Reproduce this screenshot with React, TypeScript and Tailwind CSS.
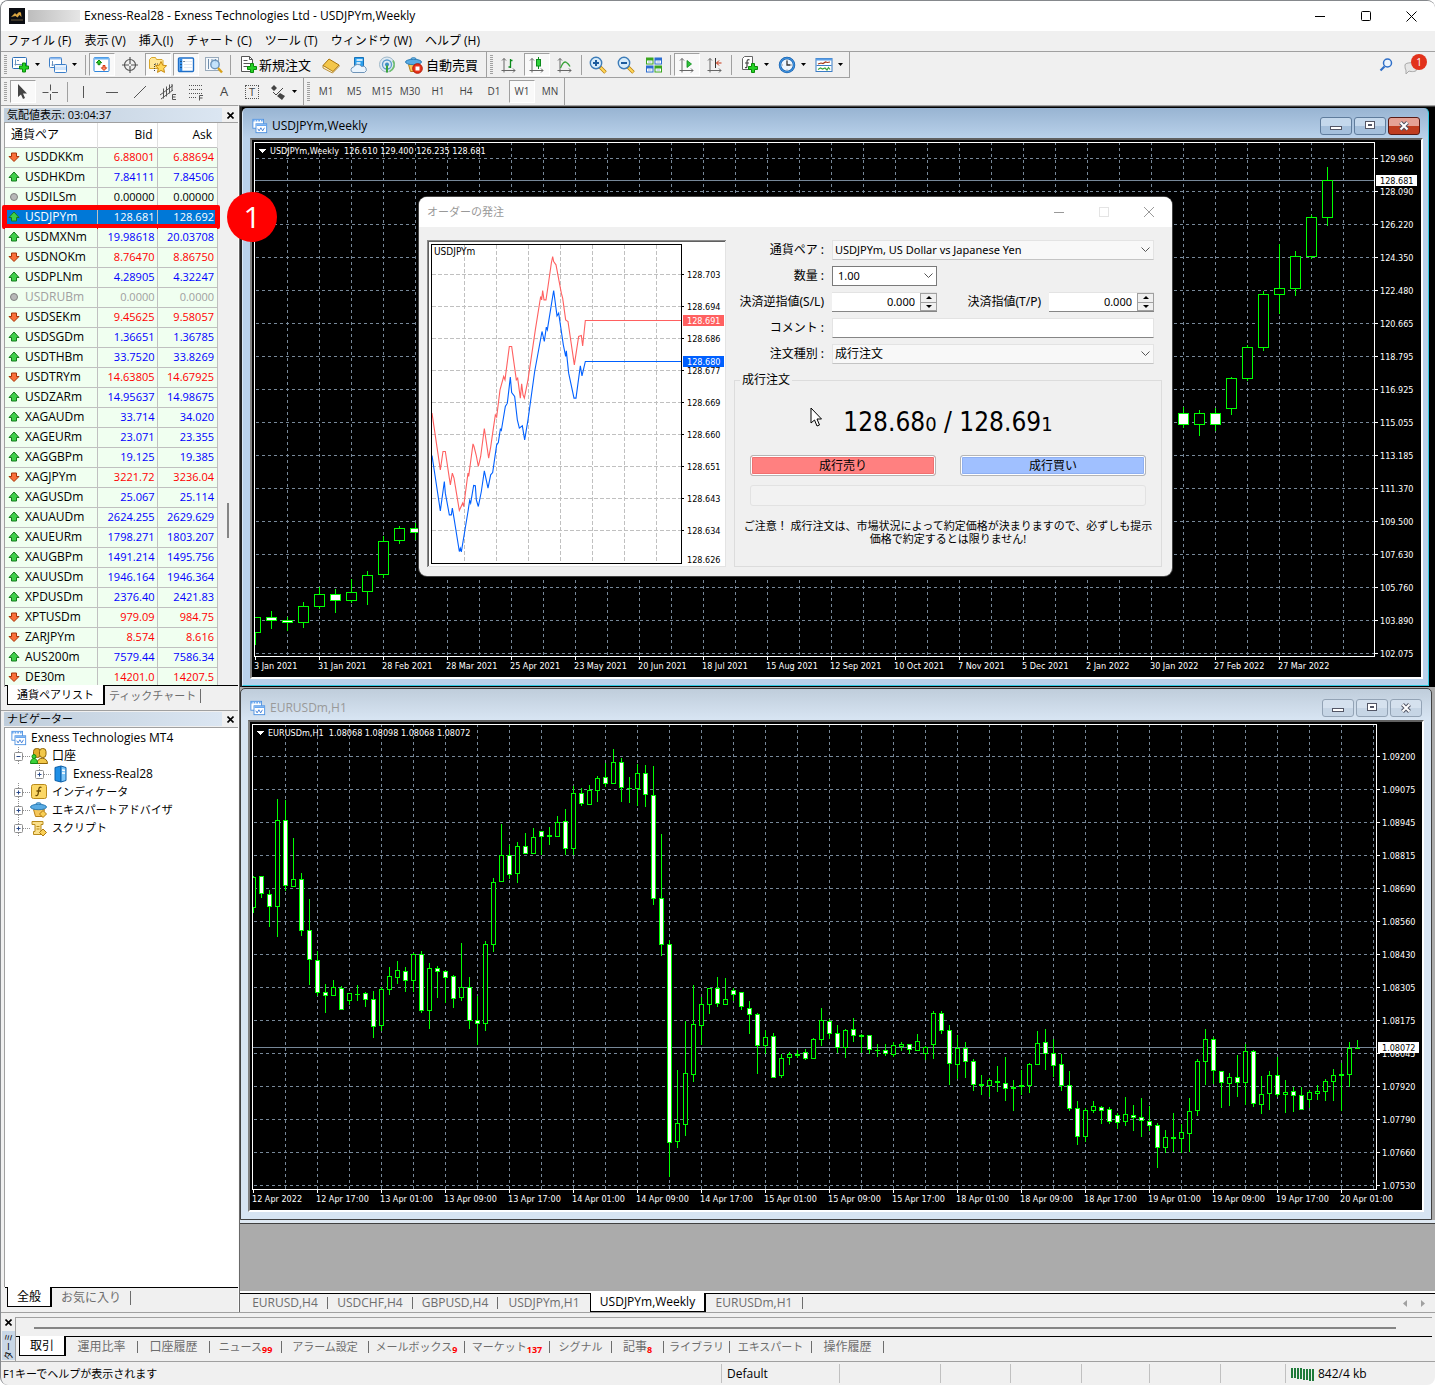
import type { ReactNode } from 'react';

type Dir = 'up' | 'down' | 'flat' | 'off';

const quotes: { symbol: string; bid: string; ask: string; dir: Dir; selected?: boolean }[] = [
  { symbol: 'USDDKKm', bid: '6.88001', ask: '6.88694', dir: 'down' },
  { symbol: 'USDHKDm', bid: '7.84111', ask: '7.84506', dir: 'up' },
  { symbol: 'USDILSm', bid: '0.00000', ask: '0.00000', dir: 'flat' },
  { symbol: 'USDJPYm', bid: '128.681', ask: '128.692', dir: 'up', selected: true },
  { symbol: 'USDMXNm', bid: '19.98618', ask: '20.03708', dir: 'up' },
  { symbol: 'USDNOKm', bid: '8.76470', ask: '8.86750', dir: 'down' },
  { symbol: 'USDPLNm', bid: '4.28905', ask: '4.32247', dir: 'up' },
  { symbol: 'USDRUBm', bid: '0.0000', ask: '0.0000', dir: 'off' },
  { symbol: 'USDSEKm', bid: '9.45625', ask: '9.58057', dir: 'down' },
  { symbol: 'USDSGDm', bid: '1.36651', ask: '1.36785', dir: 'up' },
  { symbol: 'USDTHBm', bid: '33.7520', ask: '33.8269', dir: 'up' },
  { symbol: 'USDTRYm', bid: '14.63805', ask: '14.67925', dir: 'down' },
  { symbol: 'USDZARm', bid: '14.95637', ask: '14.98675', dir: 'up' },
  { symbol: 'XAGAUDm', bid: '33.714', ask: '34.020', dir: 'up' },
  { symbol: 'XAGEURm', bid: '23.071', ask: '23.355', dir: 'up' },
  { symbol: 'XAGGBPm', bid: '19.125', ask: '19.385', dir: 'up' },
  { symbol: 'XAGJPYm', bid: '3221.72', ask: '3236.04', dir: 'down' },
  { symbol: 'XAGUSDm', bid: '25.067', ask: '25.114', dir: 'up' },
  { symbol: 'XAUAUDm', bid: '2624.255', ask: '2629.629', dir: 'up' },
  { symbol: 'XAUEURm', bid: '1798.271', ask: '1803.207', dir: 'up' },
  { symbol: 'XAUGBPm', bid: '1491.214', ask: '1495.756', dir: 'up' },
  { symbol: 'XAUUSDm', bid: '1946.164', ask: '1946.364', dir: 'up' },
  { symbol: 'XPDUSDm', bid: '2376.40', ask: '2421.83', dir: 'up' },
  { symbol: 'XPTUSDm', bid: '979.09', ask: '984.75', dir: 'down' },
  { symbol: 'ZARJPYm', bid: '8.574', ask: '8.616', dir: 'down' },
  { symbol: 'AUS200m', bid: '7579.44', ask: '7586.34', dir: 'up' },
  { symbol: 'DE30m', bid: '14201.0', ask: '14207.5', dir: 'down' },
];

const dirColor: Record<Dir, string> = {
  up: 'text-[#0000ff]',
  down: 'text-[#ff0000]',
  flat: 'text-black',
  off: 'text-[#a0a0a0]',
};

const menus = ['ファイル (F)', '表示 (V)', '挿入(I)', 'チャート (C)', 'ツール (T)', 'ウィンドウ (W)', 'ヘルプ (H)'];
const timeframes = ['M1', 'M5', 'M15', 'M30', 'H1', 'H4', 'D1', 'W1', 'MN'];

const terminalTabs = [
  { label: '運用比率', style: 'w-[72px] text-[12px]' },
  { label: '口座履歴', style: 'w-[72px] text-[12px]' },
  { label: 'ニュース', badge: '99', style: 'w-[72px] text-[11px]' },
  { label: 'アラーム設定', style: 'w-[87px] text-[11px]' },
  { label: 'メールボックス', badge: '9', style: 'w-[96px] text-[11px]' },
  { label: 'マーケット', badge: '137', style: 'w-[85px] text-[11px]' },
  { label: 'シグナル', style: 'w-[62px] text-[11px]' },
  { label: '記事', badge: '8', style: 'w-[52px] text-[12px]' },
  { label: 'ライブラリ', style: 'w-[66px] text-[11px]' },
  { label: 'エキスパート', style: 'w-[82px] text-[11px]' },
  { label: '操作履歴', style: 'w-[72px] text-[12px]' },
];

// x, high, body top, body bottom, low, bearish
type Candle = [number, number, number, number, number, number];

const weekly: Candle[] = [
  [255, 617, 617, 632, 644, 0], [271, 611, 617, 620, 628, 1], [287, 617, 620, 622, 630, 1],
  [303, 602, 606, 622, 627, 0], [319, 587, 594, 606, 608, 0], [335, 589, 594, 600, 612, 1],
  [351, 579, 592, 600, 602, 0], [367, 571, 575, 591, 604, 0], [383, 536, 541, 574, 577, 0],
  [399, 526, 528, 540, 543, 0], [415, 523, 528, 532, 539, 1], [1167, 410, 413, 420, 424, 0],
  [1183, 407, 413, 424, 427, 1], [1199, 410, 413, 424, 435, 0], [1215, 408, 413, 424, 430, 1],
  [1231, 377, 378, 408, 414, 0], [1247, 345, 347, 378, 380, 0], [1263, 291, 294, 347, 350, 0],
  [1279, 244, 288, 294, 313, 0], [1295, 251, 256, 288, 295, 0], [1311, 215, 217, 256, 258, 0],
  [1327, 167, 180, 217, 225, 0],
];

// one entry per hour: high, body top, body bottom, low, bearish
const hourlyBars: [number, number, number, number, number][] = [
  [876, 877, 907, 912, 0], [876, 876, 893, 897, 1], [890, 894, 906, 926, 1], [799, 820, 906, 936, 0],
  [800, 820, 885, 890, 1], [838, 879, 886, 886, 0], [873, 879, 930, 935, 1], [899, 930, 959, 984, 1],
  [951, 960, 992, 995, 1], [984, 992, 995, 1012, 1], [980, 987, 995, 995, 0], [986, 988, 1009, 1009, 1],
  [993, 993, 1000, 1004, 0], [985, 994, 994, 1000, 0], [992, 993, 999, 1006, 1], [991, 999, 1026, 1037, 1],
  [987, 989, 1025, 1030, 0], [967, 976, 989, 994, 0], [961, 970, 977, 983, 0], [967, 971, 980, 991, 1],
  [953, 954, 980, 991, 0], [951, 954, 1010, 1012, 1], [963, 968, 1010, 1028, 0], [966, 968, 971, 997, 1],
  [970, 971, 977, 1002, 1], [975, 976, 998, 1007, 1], [943, 987, 997, 1000, 0], [977, 987, 1020, 1028, 1],
  [996, 1020, 1023, 1044, 1], [941, 944, 1023, 1030, 0], [878, 882, 944, 951, 0], [824, 855, 881, 881, 0],
  [845, 855, 874, 878, 1], [842, 846, 873, 882, 0], [833, 846, 853, 853, 1], [828, 837, 853, 853, 0],
  [831, 831, 836, 854, 1], [827, 835, 836, 844, 0], [816, 822, 836, 836, 0], [809, 821, 848, 854, 1],
  [786, 793, 848, 854, 0], [788, 793, 803, 805, 1], [785, 790, 804, 804, 0], [776, 778, 790, 801, 0],
  [763, 777, 783, 786, 1], [749, 762, 783, 783, 0], [758, 762, 787, 801, 1], [777, 788, 788, 802, 0],
  [764, 773, 788, 805, 0], [765, 773, 794, 806, 1], [766, 795, 898, 904, 1], [834, 898, 944, 955, 1],
  [940, 944, 1142, 1176, 1], [1070, 1123, 1141, 1147, 0], [1021, 1073, 1124, 1135, 0], [985, 1024, 1074, 1081, 0],
  [997, 1004, 1025, 1044, 0], [988, 988, 1004, 1013, 0], [977, 988, 1003, 1006, 1], [978, 999, 1004, 1004, 0],
  [988, 990, 994, 1000, 1], [992, 992, 1006, 1009, 1], [1001, 1008, 1014, 1033, 1], [1013, 1014, 1045, 1073, 1],
  [1030, 1037, 1045, 1053, 0], [1033, 1036, 1077, 1077, 1], [1054, 1058, 1075, 1077, 0], [1052, 1054, 1057, 1064, 0],
  [1050, 1054, 1055, 1057, 0], [1049, 1052, 1058, 1059, 1], [1038, 1039, 1058, 1058, 0], [1008, 1020, 1039, 1045, 0],
  [1019, 1021, 1033, 1038, 1], [1025, 1033, 1047, 1052, 1], [1029, 1030, 1047, 1057, 0], [1018, 1029, 1035, 1041, 1],
  [1034, 1035, 1036, 1052, 0], [1035, 1035, 1049, 1053, 1], [1044, 1050, 1050, 1056, 0], [1044, 1050, 1053, 1055, 1],
  [1042, 1045, 1054, 1056, 0], [1042, 1044, 1046, 1050, 0], [1044, 1044, 1049, 1053, 1], [1034, 1041, 1050, 1050, 0],
  [1046, 1047, 1053, 1059, 0], [1011, 1013, 1044, 1058, 0], [1011, 1013, 1030, 1033, 1], [1025, 1030, 1063, 1084, 1],
  [1035, 1048, 1064, 1078, 0], [1042, 1048, 1061, 1077, 1], [1059, 1061, 1084, 1090, 1], [1075, 1084, 1085, 1094, 0],
  [1078, 1080, 1085, 1096, 0], [1066, 1081, 1082, 1091, 0], [1057, 1083, 1088, 1100, 1], [1080, 1087, 1088, 1110, 0],
  [1070, 1085, 1086, 1094, 0], [1063, 1064, 1085, 1092, 0], [1031, 1043, 1064, 1064, 0], [1029, 1042, 1053, 1069, 1],
  [1039, 1053, 1065, 1076, 1], [1054, 1064, 1085, 1090, 1], [1071, 1085, 1108, 1110, 1], [1101, 1108, 1136, 1144, 1],
  [1108, 1110, 1136, 1141, 0], [1101, 1106, 1110, 1112, 0], [1106, 1107, 1110, 1123, 1], [1107, 1109, 1121, 1123, 1],
  [1113, 1115, 1122, 1128, 1], [1097, 1114, 1121, 1125, 0], [1105, 1115, 1117, 1130, 1], [1098, 1117, 1120, 1136, 1],
  [1106, 1121, 1125, 1130, 1], [1123, 1125, 1147, 1167, 1], [1130, 1137, 1147, 1152, 0], [1113, 1137, 1138, 1151, 0],
  [1124, 1132, 1138, 1152, 0], [1098, 1111, 1133, 1151, 0], [1059, 1061, 1110, 1115, 0], [1029, 1039, 1061, 1084, 0],
  [1037, 1039, 1070, 1083, 1], [1071, 1071, 1082, 1107, 1], [1073, 1077, 1083, 1105, 0], [1055, 1077, 1082, 1096, 1],
  [1044, 1051, 1082, 1104, 0], [1050, 1051, 1103, 1106, 1], [1076, 1094, 1104, 1113, 0], [1071, 1075, 1093, 1109, 0],
  [1057, 1075, 1094, 1096, 1], [1080, 1092, 1094, 1112, 0], [1087, 1091, 1095, 1111, 1], [1087, 1095, 1109, 1109, 1],
  [1090, 1092, 1099, 1107, 0], [1085, 1091, 1093, 1099, 0], [1079, 1081, 1091, 1100, 0], [1069, 1075, 1081, 1100, 0],
  [1063, 1074, 1075, 1110, 0], [1042, 1048, 1074, 1086, 0], [1040, 1048, 1048, 1048, 0],
];
const hourly: Candle[] = hourlyBars.map(([h, t, b, l, bear], i) => [253 + i * 8, h, t, b, l, bear]);

const weeklyPrices = ['129.960', '128.090', '126.220', '124.350', '122.480', '120.665', '118.795', '116.925', '115.055', '113.185', '111.370', '109.500', '107.630', '105.760', '103.890', '102.075'];
const weeklyDates = ['3 Jan 2021', '31 Jan 2021', '28 Feb 2021', '28 Mar 2021', '25 Apr 2021', '23 May 2021', '20 Jun 2021', '18 Jul 2021', '15 Aug 2021', '12 Sep 2021', '10 Oct 2021', '7 Nov 2021', '5 Dec 2021', '2 Jan 2022', '30 Jan 2022', '27 Feb 2022', '27 Mar 2022'];
const hourlyPrices = ['1.09200', '1.09075', '1.08945', '1.08815', '1.08690', '1.08560', '1.08430', '1.08305', '1.08175', '1.08045', '1.07920', '1.07790', '1.07660', '1.07530'];
const hourlyDates = ['12 Apr 2022', '12 Apr 17:00', '13 Apr 01:00', '13 Apr 09:00', '13 Apr 17:00', '14 Apr 01:00', '14 Apr 09:00', '14 Apr 17:00', '15 Apr 01:00', '15 Apr 09:00', '15 Apr 17:00', '18 Apr 01:00', '18 Apr 09:00', '18 Apr 17:00', '19 Apr 01:00', '19 Apr 09:00', '19 Apr 17:00', '20 Apr 01:00'];

const tickAsk = '42,670 67,840 75,785 82,785 97,885 103,850 108,865 124,962 134,940 137,950 150,850 152,860 165,762 168,770 175,798 181,830 188,800 199,716 212,805 218,772 224,730 232,675 236,682 246,600 257,560 261,570 274,470 281,470 295,570 299,565 307,625 311,582 315,615 319,625 330,570 352,420 368,320 371,330 374,302 378,330 384,330 390,290 400,220 404,200 407,215 414,225 430,310 434,325 443,390 450,395 469,525 482,440 490,437 494,468 502,392 790,392';
const tickBid = '42,797 67,963 79,875 82,910 94,975 100,975 103,955 108,985 124,1085 127,1075 130,1086 150,965 155,932 158,940 167,887 172,888 175,930 181,950 190,905 199,843 210,895 218,855 224,848 236,765 241,758 247,718 250,722 262,650 268,640 277,562 281,608 290,620 298,690 304,715 313,708 320,750 330,690 350,545 372,425 379,455 385,412 388,420 400,345 407,302 417,378 422,370 436,465 443,500 445,483 452,550 468,625 474,625 487,528 492,558 502,515 790,515';
const tickPrices = ['128.703', '128.694', '128.686', '128.677', '128.669', '128.660', '128.651', '128.643', '128.634'];

/* ---------- icons ---------- */

function Svg({ children, size = 18 }: { children: ReactNode; size?: number }) {
  return (
    <svg width={size} height={size} viewBox="0 0 18 18" fill="none" className="shrink-0" aria-hidden="true">
      {children}
    </svg>
  );
}

const Plus = ({ x, y }: { x: number; y: number }) => (
  <path transform={`translate(${x} ${y})`} d="M3.5.5h3v3h3v3h-3v3h-3v-3h-3v-3h3z" fill="#25d125" stroke="#0a8a0a" />
);

const ChartsIcon = ({ size = 16 }: { size?: number }) => (
  <Svg size={size}>
    <rect x="1" y="1.5" width="12" height="10" fill="#fff" stroke="#4a8fe0" />
    <path d="M1 3h12" stroke="#6aa8f0" strokeWidth="2" strokeDasharray="2 1" />
    <rect x="4.500" y="6.500" width="12" height="10" fill="#fff" stroke="#4a8fe0" />
    <path d="M5 8h11" stroke="#6aa8f0" strokeWidth="2" />
    <path d="M6.500 12l1.500 2.500 2-3.500 2 3.500 2-3.500" stroke="#3a7ad6" />
  </Svg>
);

const NewChartIcon = () => (
  <Svg>
    <rect x=".5" y="1.500" width="14" height="11" rx="1" fill="#fff" stroke="#2f6fb5" />
    <path d="M3.500 3.500v6m-1-1h9M3 4.500h1m1 0h2" stroke="#6a93bf" />
    <Plus x={7} y={6.5} />
  </Svg>
);

const ProfilesIcon = () => (
  <Svg>
    <rect x=".5" y="1.500" width="12" height="10" rx="1" fill="#fff" stroke="#3d7fc8" />
    <path d="M1 2.500h11" stroke="#8dbaf0" strokeWidth="2" />
    <path d="M3.500 5v5m-1-1h8" stroke="#6a93bf" />
    <rect x="5.500" y="8.500" width="12" height="8" rx="1" fill="#cfe4fb" stroke="#3d7fc8" />
    <path d="M6 10h11" stroke="#fff" />
    <path d="M6 15h11" stroke="#fff" strokeWidth="2" />
  </Svg>
);

const MarketWatchIcon = () => (
  <Svg>
    <rect x="1" y="1.500" width="15" height="14" rx="1" fill="#fff" stroke="#2f86dd" />
    <path d="M1.500 2.500h14" stroke="#6bb2f2" strokeWidth="2" />
    <path d="M6 4l2.700 2.700H7v2H5v-2H3.300z" fill="#2fd12f" stroke="#12860f" />
    <path d="M11 14.500l-2.700-2.700H10v-2.300h2v2.300h1.700z" fill="#ff9070" stroke="#d23a10" />
  </Svg>
);

const CrosshairIcon = () => (
  <Svg>
    <circle cx="9" cy="9" r="5.500" stroke="#555" strokeWidth="1.200" />
    <path d="M9 1v7M9 10v7M1 9h7M10 9h7" stroke="#555" strokeWidth="1.200" />
  </Svg>
);

const FolderStarIcon = () => (
  <Svg>
    <path d="M.5 12.500v-9l2-2h4l1 2h5.500l1 1v8z" fill="#ffe79a" stroke="#d8a72b" />
    <path d="M5.500 8v8M6 8h4" stroke="#444" strokeDasharray="1 1" />
    <path d="M12 5.500l1.700 3.700 3.900.5-2.900 2.700.8 4-3.500-2-3.500 2 .8-4-2.900-2.700 3.900-.5z" fill="#ffd75a" stroke="#c88a10" />
  </Svg>
);

const TerminalIcon = () => (
  <Svg>
    <rect x="1.500" y="2" width="15" height="13.500" rx="1" fill="#fff" stroke="#1f6fc8" strokeWidth="1.400" />
    <path d="M3.800 2.500v12.500" stroke="#2f8be8" strokeWidth="3" />
    <path d="M7 5.500h8M7 8.500h8M7 11.500h8" stroke="#dfe7f2" />
    <path d="M3.500 5.500h1M3.500 8.500h1M3.500 11.500h1M6.500 5.500h1" stroke="#123" />
  </Svg>
);

const TesterIcon = () => (
  <Svg>
    <rect x=".5" y="1.500" width="13" height="13" fill="#f4f8fc" stroke="#9ab" />
    <path d="M3.500 3v10M7 3v6M10.500 3v4" stroke="#6f8dab" />
    <circle cx="10" cy="8.500" r="4.200" fill="#bfe0fb" fillOpacity=".9" stroke="#6d95bb" strokeWidth="1.400" />
    <path d="M13 12l4 4.500" stroke="#d8a018" strokeWidth="2.400" />
  </Svg>
);

const NewOrderIcon = () => (
  <Svg>
    <path d="M1.500.5h8l3 3v12h-11z" fill="#fff" stroke="#555" />
    <path d="M9.500.5v3h3M3.500 4.500h4m-4 3h7m-7 3h5" stroke="#555" />
    <Plus x={7} y={7} />
  </Svg>
);

const BookIcon = () => (
  <Svg>
    <path d="M1 9.500L7 3l10 6-6 7z" fill="#f3c64a" stroke="#a8740c" />
    <path d="M1 9.500v2.500l9.500 5 6.500-6.500V9l-6 6.500z" fill="#fff3cc" stroke="#a8740c" strokeWidth=".8" />
  </Svg>
);

const VpsIcon = () => (
  <Svg>
    <path d="M4.500 1.500h9v9h-9z" fill="#2ea0ec" stroke="#1672ba" />
    <path d="M6.500 4h6m-6 3h4" stroke="#fff" strokeWidth="1.500" />
    <path d="M3 16.500a2.700 2.700 0 0 1 .5-5.300 4.500 4.500 0 0 1 8-.7 3 3 0 0 1 3 6z" fill="#eaf4fd" stroke="#6f94b8" />
  </Svg>
);

const SignalIcon = () => (
  <Svg>
    <circle cx="9" cy="8.500" r="7.500" fill="#dfeaf3" stroke="#9fb8c8" />
    <circle cx="9" cy="8.500" r="4.500" stroke="#5c9ccc" strokeWidth="1.300" />
    <circle cx="9" cy="8.500" r="2" fill="#3a8fc3" />
    <path d="M9 9.500v7" stroke="#3aa33a" strokeWidth="2" />
    <path d="M11.500 15.500a7.500 7.500 0 0 0 3.500-11" stroke="#6fbf6f" strokeWidth="1.800" />
  </Svg>
);

const ExpertIcon = ({ stop = false, size = 18 }: { stop?: boolean; size?: number }) => (
  <Svg size={size}>
    <path d="M3.500 8.500l2 7h7l2-7z" fill="#f6c75a" stroke="#b98016" />
    <path d="M5 5c0-4.500 7-4.500 7 0z" fill="#7cc0ec" stroke="#2e7db6" />
    <ellipse cx="8.500" cy="6" rx="8" ry="2.700" fill="#59abe3" stroke="#2e7db6" />
    {stop ? (
      <>
        <circle cx="12.500" cy="12.500" r="4.800" fill="#e8341c" stroke="#b01a08" />
        <rect x="10.500" y="10.500" width="4" height="4" fill="#fff" />
      </>
    ) : (
      <path d="M13 9.500l3.500 3.500-3.500 3.500L9.500 13z" fill="#f9cf55" stroke="#b07a10" />
    )}
  </Svg>
);

const Axes = () => <path d="M4 16.500V2.500m-2 2l2-2 2 2M1.500 14.500H15m-2-2l2 2-2 2" stroke="#666" />;

const BarsIcon = () => (
  <Svg><Axes /><path d="M10.500 3v9M8.500 11h2M10.500 4.500h2" stroke="#0a8a1a" strokeWidth="1.300" /></Svg>
);
const CandleIcon = () => (
  <Svg><Axes /><path d="M10.500 1v12" stroke="#0a8a1a" /><rect x="8.500" y="3.500" width="4" height="6.500" fill="#2fd13a" stroke="#0a8a1a" /></Svg>
);
const LineIcon = () => (
  <Svg><Axes /><path d="M4.500 12c2-5 4-7 6-5.500 1.500 1 2.500 2 3.500 4" stroke="#3aa33a" strokeWidth="1.300" /></Svg>
);
const ScrollIcon = () => (
  <Svg><Axes /><path d="M9 4.500l4.500 3.500L9 11.500z" fill="#2fc13a" stroke="#0a8a1a" strokeWidth=".8" /></Svg>
);
const ShiftIcon = () => (
  <Svg><Axes /><path d="M9.500 2v10" stroke="#333" /><path d="M15.500 7h-5m2.500-2.500L10.500 7 13 9.500" stroke="#c63210" /></Svg>
);

const ZoomIcon = ({ plus = false }: { plus?: boolean }) => (
  <Svg>
    <path d="M11 11l5.500 5.500" stroke="#b98010" strokeWidth="3.600" />
    <path d="M11.500 11.500l4.700 4.700" stroke="#ffd75a" strokeWidth="2" />
    <circle cx="7" cy="7" r="5.700" fill="#d7ecfb" stroke="#3d7cb8" strokeWidth="1.400" />
    <path d="M4 7h6" stroke="#1d5c9e" strokeWidth="2" />
    {plus && <path d="M7 4v6" stroke="#1d5c9e" strokeWidth="2" />}
  </Svg>
);

const TileIcon = () => (
  <Svg>
    <rect x="1" y="1.500" width="7.500" height="7" fill="#3aa51f" />
    <rect x="9.500" y="1.500" width="7.500" height="7" fill="#2b6cd0" />
    <rect x="1" y="9.500" width="7.500" height="7" fill="#2b6cd0" />
    <rect x="9.500" y="9.500" width="7.500" height="7" fill="#3aa51f" />
    <path d="M2 4.500h5.500v3H2zM10.500 4.500H16v3h-5.500zM2 12.500h5.500v3H2zM10.500 12.500H16v3h-5.500z" fill="#fff" />
    <path d="M3 6h3.500M11.500 6H15M3 14h3.500M11.500 14H15" stroke="#9fb8d8" />
  </Svg>
);

const IndicatorsIcon = () => (
  <Svg>
    <path d="M1.500 2.500l2-2h8v13h-10z" fill="#fff" stroke="#666" />
    <path d="M8.500 4c-2-1-2.500.5-2.500 2v4c0 1.500-.5 2-2 1.500M4 7h4" stroke="#444" strokeWidth="1.200" />
    <Plus x={7} y={7} />
  </Svg>
);

const ClockIcon = () => (
  <Svg>
    <circle cx="9" cy="9" r="7" fill="#eef6fd" stroke="#1560b0" strokeWidth="2.500" />
    <circle cx="9" cy="9" r="7" stroke="#4aa0ea" />
    <path d="M9 4.500V9h3.500" stroke="#333" strokeWidth="1.300" />
    <path d="M9 3.500v1M9 13.500v1M3.800 9h1M13.200 9h1" stroke="#888" />
  </Svg>
);

const TemplateIcon = () => (
  <Svg>
    <rect x="1" y="2.500" width="16" height="13" fill="#fff" stroke="#3a7cc4" />
    <path d="M1 3.500h16" stroke="#5a9ee6" strokeWidth="2" />
    <path d="M1.500 9.500h15" stroke="#3a7cc4" />
    <path d="M3 8l3-1 2 .5 2.500-1.500 2 .5L15 6" stroke="#a33a1a" strokeWidth="1.200" />
    <path d="M3 13.500l2.500-1.500 2 1 2.500-1 2 2 1.500-2.500 1.500 2" stroke="#3aa33a" strokeWidth="1.200" />
  </Svg>
);

const SearchIcon = () => (
  <Svg>
    <circle cx="10.500" cy="7" r="4" fill="#eef5fd" stroke="#2f6fc8" strokeWidth="1.500" />
    <path d="M7.500 10.500L3.500 14.500" stroke="#2f6fc8" strokeWidth="2.200" />
  </Svg>
);

const QuoteIcon = ({ dir }: { dir: Dir }) => (
  <svg width="12" height="12" viewBox="0 0 12 12" className="shrink-0" aria-hidden="true">
    {dir === 'up' && <path d="M6 1l5 5.500H8.500V10h-5V6.500H1z" fill="#3fd04a" stroke="#157a1c" />}
    {dir === 'down' && <path d="M6 10.500L1 5.500h2.500V2h5v3.500H11z" fill="#f9703a" stroke="#a83408" />}
    {(dir === 'flat' || dir === 'off') && <circle cx="6" cy="6" r="3.500" fill="#b8b8b8" stroke="#808080" />}
  </svg>
);

const AccountsIcon = () => (
  <Svg>
    <rect x="3.500" y="1.500" width="7" height="9" rx="3" fill="#e0ab2a" stroke="#8f6508" />
    <rect x="9.500" y="1.500" width="6.500" height="9" rx="3" fill="#f2c84a" stroke="#8f6508" />
    <path d="M7 16.500c0-7 10.500-7 10.500 0z" fill="#f2c84a" stroke="#8f6508" />
    <path d="M.5 16.500c0-4 2-5 3.500-5s3.500 1 3.500 5z" fill="#3ad13a" stroke="#128a12" />
    <circle cx="4" cy="9.500" r="2" fill="#3ad13a" stroke="#128a12" />
  </Svg>
);

const ServerIcon = () => (
  <Svg>
    <path d="M4 2.500l6-1.500v16l-6-1.500z" fill="#1f8fe6" stroke="#0d5fa8" />
    <path d="M10 1l5 1.500v13L10 17z" fill="#7cc6fa" stroke="#0d5fa8" />
    <path d="M11 5l3 .5M11 8l3 .3" stroke="#fff" strokeWidth="1.400" />
  </Svg>
);

const FunctionIcon = () => (
  <Svg>
    <rect x="1.500" y="1.500" width="15" height="14" rx="2" fill="#fbd766" stroke="#b98a1a" />
    <path d="M11.500 4.500c-2-1-2.500.5-2.700 2l-.6 4c-.3 1.800-1 2.500-2.700 1.800M6.500 8h4.500" stroke="#6b4a00" strokeWidth="1.300" />
  </Svg>
);

const ScriptIcon = () => (
  <Svg>
    <path d="M2 2.500h11v3h-2v7h1v3H3.500v-3H5v-7H2z" fill="#fbe08a" stroke="#b98a1a" />
    <path d="M6.500 7.500h3M6.500 10h3" stroke="#b98a1a" />
    <path d="M13 10l3.500 3.500-3.500 3.500-3.500-3.500z" fill="#f9cf55" stroke="#b07a10" />
  </Svg>
);

const Caret = () => (
  <svg width="7" height="4" viewBox="0 0 7 4" className="shrink-0" aria-hidden="true"><path d="M1 0h5L3.500 3z" fill="#000" /></svg>
);

/* ---------- toolbar pieces ---------- */

function Tool({ label, active, children }: { label: string; active?: boolean; children: ReactNode }) {
  return (
    <button
      type="button"
      aria-label={label}
      className={`mx-px flex h-[23px] w-[26px] shrink-0 items-center justify-center border text-[10px] text-[#444] ${
        active ? 'border-t-[#a0a0a0] border-l-[#a0a0a0] border-r-white border-b-white bg-[#f9f9f9]' : 'border-transparent'
      }`}
    >
      {children}
    </button>
  );
}

function DropTool({ label, children }: { label: string; children: ReactNode }) {
  return (
    <button type="button" aria-label={label} className="flex h-[23px] w-[37px] shrink-0 items-center gap-1 pl-[3px]">
      {children}
      <Caret />
    </button>
  );
}

const Grip = () => <span className="mr-[2px] ml-[3px] h-5 w-[3px] shrink-0 bg-[repeating-linear-gradient(#a0a0a0_0_1px,#f0f0f0_1px_2px)]" />;
const Sep = () => <span className="mx-[2px] h-5 w-px shrink-0 bg-[#a0a0a0]" />;

/* ---------- charts ---------- */

function Candles({ data, half }: { data: Candle[]; half: number }) {
  return (
    <>
      {data.map(([x, high, top, bottom, low, bear]) => (
        <g key={x}>
          <path d={`M${x + 0.5} ${high}V${low + 1}`} stroke="#00ff00" />
          <rect
            x={x - half + 0.5}
            y={top + 0.5}
            width={half * 2}
            height={Math.max(bottom - top, 0)}
            fill={bear ? '#ffffff' : '#000000'}
            stroke="#00ff00"
          />
          {bottom - top < 1 && <path d={`M${x - half} ${top + 0.5}h${half * 2 + 1}`} stroke="#00ff00" />}
        </g>
      ))}
    </>
  );
}

interface PriceChartProps {
  view: string;
  left: number;
  top: number;
  right: number;
  bottom: number;
  gridX: number;
  gridY: number;
  price: string;
  priceY: number;
  prices: string[];
  dates: string[];
  title: string;
  data: Candle[];
  half: number;
}

function PriceChart(p: PriceChartProps) {
  const columns = Array.from({ length: Math.floor((p.right - p.gridX) / 32) + 1 }, (_, i) => p.gridX + i * 32);
  const rowY = (i: number) => p.gridY + i * 33;
  return (
    <svg viewBox={p.view} className="block w-full bg-black" shapeRendering="crispEdges" role="img" aria-label={p.title}>
      <g stroke="#778899" strokeDasharray="3 3">
        {columns.map((x) => <path key={x} d={`M${x + 0.5} ${p.top}V${p.bottom}`} />)}
        {p.prices.map((t, i) => <path key={t} d={`M${p.left + 2} ${rowY(i) + 0.5}H${p.right}`} />)}
      </g>
      <path d={`M${p.left} ${p.priceY + 0.5}H${p.right}`} stroke="#778899" />
      <Candles data={p.data} half={p.half} />
      <path d={`M${p.left - 6} ${p.top}h6V${p.bottom}h-6z`} fill="#000" />
      <path d={`M${p.left + 0.5} ${p.top + 0.5}H${p.right + 0.5}V${p.bottom + 0.5}H${p.left + 0.5}z`} stroke="#fff" fill="none" />
      <g fontFamily="'DejaVu Sans Condensed', 'DejaVu Sans', sans-serif" fontSize="9" fill="#fff">
        {p.prices.map((t, i) => (
          <g key={t}>
            <path d={`M${p.right} ${rowY(i) + 0.5}h4`} stroke="#fff" />
            <text x={p.right + 6} y={rowY(i) + 4}>{t}</text>
          </g>
        ))}
        {p.dates.map((t, i) => (
          <g key={t}>
            <path d={`M${p.left + 1.5 + i * 64} ${p.bottom}v4`} stroke="#fff" />
            <text x={p.left + i * 64} y={p.bottom + 13}>{t}</text>
          </g>
        ))}
        <rect x={p.right + 2} y={p.priceY - 5} width="41" height="11" />
        <text x={p.right + 6} y={p.priceY + 4} fill="#000">{p.price}</text>
        <path d={`M${p.left + 4} ${p.top + 7}h8l-4 4z`} />
        <text x={p.left + 16} y={p.top + 12} xmlSpace="preserve">{p.title}</text>
      </g>
    </svg>
  );
}

function TickChart() {
  return (
    <svg viewBox="427 240 299 327" className="block w-[299px] bg-white" shapeRendering="crispEdges" role="img" aria-label="USDJPYm">
      <path d="M427.500 567V240.500H726" stroke="#8a8a8a" fill="none" />
      <path d="M428.500 567V241.500H725" stroke="#606060" fill="none" />
      <path d="M725.500 241V566.500H428" stroke="#e3e3e3" fill="none" />
      <g stroke="#c0c0c0" strokeDasharray="4 2">
        {[464, 496, 528, 560, 592, 624, 656].map((x) => <path key={x} d={`M${x + 0.5} 245V563`} />)}
        {tickPrices.map((t, i) => <path key={t} d={`M432 ${274.5 + i * 32}H681`} />)}
      </g>
      <g transform="translate(418 189.830) scale(.33333)" fill="none" strokeWidth="1.100" shapeRendering="auto">
        <polyline points={tickAsk} stroke="#ff6060" vectorEffect="non-scaling-stroke" />
        <polyline points={tickBid} stroke="#0060ff" vectorEffect="non-scaling-stroke" />
      </g>
      <rect x="431.500" y="244.500" width="250" height="319" stroke="#000" fill="none" />
      <g fontFamily="'DejaVu Sans Condensed', 'DejaVu Sans', sans-serif" fontSize="9" fill="#000">
        <text x="434" y="255" fontSize="10">USDJPYm</text>
        {tickPrices.map((t, i) => (
          <g key={t}>
            <path d={`M682 ${274.5 + i * 32}h2`} stroke="#000" />
            <text x="687" y={278 + i * 32}>{t}</text>
          </g>
        ))}
        <text x="687" y="563">128.626</text>
        <rect x="683" y="315" width="41" height="11" fill="#ff6060" />
        <rect x="683" y="356" width="41" height="11" fill="#0060ff" />
        <text x="687" y="324" fill="#fff">128.691</text>
        <text x="687" y="365" fill="#fff">128.680</text>
      </g>
    </svg>
  );
}

function WindowButtons({ focused }: { focused?: boolean }) {
  const base = 'flex h-[18px] w-8 items-center justify-center rounded-[3px] border';
  const idle = focused
    ? 'border-[#5f7c9c] bg-linear-to-b from-[#c4d8ec] from-50% to-[#a5c0dc] to-50%'
    : 'border-[#93a3b5] bg-linear-to-b from-[#d5e1ee] from-50% to-[#c6d5e5] to-50%';
  return (
    <div className="flex gap-[2px]">
      <button type="button" aria-label="最小化" className={`${base} ${idle}`}>
        <svg width="12" height="12" aria-hidden="true"><rect x=".5" y="6.500" width="11" height="3" fill="#fff" stroke="#535666" /></svg>
      </button>
      <button type="button" aria-label="最大化" className={`${base} ${idle}`}>
        <svg width="12" height="12" aria-hidden="true"><rect x="1.500" y="1.500" width="9" height="7" fill="#fff" stroke="#535666" /><rect x="4.500" y="4.500" width="3" height="1" fill="#fff" stroke="#535666" /></svg>
      </button>
      <button
        type="button"
        aria-label="閉じる"
        className={`${base} ${focused ? 'border-[#5a1a14] bg-linear-to-b from-[#e5a195] from-50% to-[#bf3c1f] to-50%' : idle}`}
      >
        <svg width="14" height="12" aria-hidden="true"><path d="M3.500 2.500l7 7m0-7l-7 7" stroke="#535666" strokeWidth="4" /><path d="M3.500 2.500l7 7m0-7l-7 7" stroke="#fff" strokeWidth="2" /></svg>
      </button>
    </div>
  );
}

/* ---------- side panels ---------- */

function PanelTitle({ children }: { children: ReactNode }) {
  return (
    <div className="flex h-[14px] items-center pl-[3px]">
      <h2 className="h-full flex-1 bg-linear-to-r from-[#bfcddb] to-[#dbe6f2] pl-[3px] text-[11px] leading-[14px]">{children}</h2>
      <button type="button" aria-label="閉じる" className="flex w-4 justify-center">
        <svg width="7" height="7" viewBox="0 0 7 7" aria-hidden="true"><path d="M.5.5l6 6m0-6l-6 6" stroke="#000" strokeWidth="1.600" /></svg>
      </button>
    </div>
  );
}

function PanelTabs({ active, other, small }: { active: string; other: string; small?: boolean }) {
  return (
    <div className={`relative ml-1 flex h-5 border-t border-black bg-[#f0f0f0] leading-4 ${small ? 'text-[11px]' : 'text-[12px]'}`}>
      <button type="button" className="-mt-px ml-[2px] border-r-2 border-b border-l border-black bg-white px-[9px]">{active}</button>
      <button type="button" className={`text-[#6d6d6d] ${small ? 'px-1' : 'px-[9px]'}`}>{other}</button>
      <span className="mt-[3px] h-[14px] w-px bg-[#6d6d6d]" />
    </div>
  );
}

function MarketWatch() {
  return (
    <section className="pt-[2px]">
      <PanelTitle>気配値表示: 03:04:37</PanelTitle>
      <div className="-mb-[2px] ml-[3px] flex border-t border-l border-[#a0a0a0]">
        <table className="w-[213px] table-fixed border-collapse text-[12px]">
          <thead>
            <tr className="h-6 bg-white">
              <th className="w-[92px] border-r border-[#e0e0e0] pl-[6px] text-left font-normal">通貨ペア</th>
              <th className="w-[60px] border-r border-[#e0e0e0] pr-1 text-right font-normal">Bid</th>
              <th className="border-r border-[#e0e0e0] pr-[5px] text-right font-normal">Ask</th>
            </tr>
          </thead>
          <tbody>
            {quotes.map((q) => (
              <tr
                key={q.symbol}
                className={`relative h-5 align-top leading-[18px] ${q.selected ? 'bg-[#0078d7] text-white' : `bg-[#f0fff0] ${dirColor[q.dir]}`}`}
              >
                <td className="border-t border-r border-[#c0c0c0] p-0 pl-[3px]">
                  <span className="flex items-center gap-[5px]">
                    <QuoteIcon dir={q.dir} />
                    <span className={q.selected ? 'text-white' : q.dir === 'off' ? '' : 'text-black'}>{q.symbol}</span>
                  </span>
                </td>
                <td className="border-t border-r border-[#c0c0c0] p-0 pr-[2px] text-right text-[11px]">{q.bid}</td>
                <td className="border-t border-r border-[#c0c0c0] p-0 pr-[3px] text-right text-[11px]">
                  {q.ask}
                  {q.selected && (
                    <>
                      <span className="absolute -top-[2px] -left-[3px] h-[24px] w-[218px] rounded-[2px] border-[5px] border-[#ff0000]" />
                      <span className="absolute -top-[15px] left-[222px] z-10 flex size-[50px] items-center justify-center rounded-full bg-[#ff0000] text-[30px] text-white">1</span>
                    </>
                  )}
                </td>
              </tr>
            ))}
          </tbody>
        </table>
        <div className="flex flex-1 items-end justify-center pb-[149px]">
          <span className="h-[35px] w-[2px] bg-[#858585]" />
        </div>
      </div>
      <PanelTabs small active="通貨ペアリスト" other="ティックチャート" />
    </section>
  );
}

function TreeRow({ icon, label, depth, box, small }: { icon: ReactNode; label: string; depth: number; box?: string; small?: boolean }) {
  return (
    <li className={`flex h-[18px] items-center gap-1 ${depth === 0 ? 'pl-[6px]' : depth === 1 ? 'pl-[9px]' : 'pl-[30px]'}`}>
      {box && (
        <span className="-mr-[5px] flex items-center">
          <svg width="17" height="18" aria-hidden="true">
            <path d={depth === 1 ? 'M4.500 0v18M9 9.500h8' : 'M4.500 0v5M9 9.500h8'} stroke="#909090" strokeDasharray="1 1" />
            <rect x=".5" y="5.500" width="8" height="8" rx="1" fill="#fff" stroke="#909090" />
            <path d={box === '+' ? 'M2.500 9.500h4M4.500 7.500v4' : 'M2.500 9.500h4'} stroke="#2b4a8a" />
          </svg>
        </span>
      )}
      {icon}
      <span className={small ? 'text-[11px]' : 'text-[12px]'}>{label}</span>
    </li>
  );
}

function Navigator() {
  return (
    <section className="mt-[5px] flex flex-1 flex-col border-t border-[#a0a0a0] pt-px">
      <PanelTitle>ナビゲーター</PanelTitle>
      <ul className="mt-[1px] ml-[3px] flex-1 border-t border-l border-[#a0a0a0] bg-white pt-px">
        <TreeRow depth={0} icon={<ChartsIcon />} label="Exness Technologies MT4" />
        <TreeRow depth={1} box="-" icon={<AccountsIcon />} label="口座" />
        <TreeRow depth={2} box="+" icon={<ServerIcon />} label="Exness-Real28" />
        <TreeRow depth={1} box="+" icon={<FunctionIcon />} label="インディケータ" small />
        <TreeRow depth={1} box="+" icon={<ExpertIcon />} label="エキスパートアドバイザ" small />
        <TreeRow depth={1} box="+" icon={<ScriptIcon />} label="スクリプト" small />
      </ul>
      <PanelTabs active="全般" other="お気に入り" />
      <div className="h-[5px]" />
    </section>
  );
}

/* ---------- order dialog ---------- */

function Chevron() {
  return (
    <svg width="9" height="6" viewBox="0 0 9 6" className="pointer-events-none absolute top-[7px] right-1" fill="none" aria-hidden="true">
      <path d="M.5.5l4 4 4-4" stroke="#555" />
    </svg>
  );
}

function Spinner({ id }: { id: string }) {
  return (
    <div className="flex h-5 w-[105px] border-t border-b border-t-[#e3e3e3] border-b-[#868686] bg-white">
      <input id={id} defaultValue="0.000" className="w-0 flex-1 bg-transparent pr-[5px] text-right outline-none" />
      <div className="flex w-[17px] flex-col border border-[#a0a0a0] bg-[#f0f0f0]">
        <button type="button" aria-label="上げる" className="flex flex-1 items-center justify-center border-b border-[#a0a0a0]">
          <svg width="6" height="3" aria-hidden="true"><path d="M0 3h6L3 0z" /></svg>
        </button>
        <button type="button" aria-label="下げる" className="flex flex-1 items-center justify-center">
          <svg width="6" height="3" aria-hidden="true"><path d="M0 0h6L3 3z" /></svg>
        </button>
      </div>
    </div>
  );
}

function OrderDialog() {
  const label = 'w-[90px] shrink-0 text-right text-[12px]';
  return (
    <div
      role="dialog"
      aria-label="オーダーの発注"
      className="absolute top-[90px] left-[177px] z-20 w-[753px] overflow-hidden rounded-lg bg-[#f0f0f0] shadow-[0_0_0_1px_#444]"
    >
      <header className="flex h-[30px] items-center bg-white pl-2 text-[11px] text-[#999]">
        <h2 className="flex-1">オーダーの発注</h2>
        <button type="button" aria-label="最小化" className="flex w-[46px] justify-center"><svg width="10" height="10" aria-hidden="true"><path d="M0 5.500h10" stroke="#999" /></svg></button>
        <button type="button" aria-label="最大化" disabled className="flex w-[44px] justify-center"><svg width="10" height="10" aria-hidden="true"><rect x=".5" y=".5" width="9" height="9" fill="none" stroke="#e4e4e4" /></svg></button>
        <button type="button" aria-label="閉じる" className="flex w-[46px] justify-center"><svg width="10" height="10" aria-hidden="true"><path d="M0 0l10 10M10 0L0 10" stroke="#999" /></svg></button>
      </header>
      <div className="flex gap-2 pt-[13px] pr-[10px] pb-[9px] pl-2 font-['Noto_Sans','Noto_Sans_CJK_JP',sans-serif] text-[11px]">
        <TickChart />
        <form className="flex flex-1 flex-col">
          <div className="flex flex-col gap-[6px] pr-2 leading-5">
            <div className="flex gap-2">
              <label htmlFor="symbol" className={label}>通貨ペア :</label>
              <div className="relative flex-1">
                <select id="symbol" className="block h-5 w-full appearance-none border border-b-[#c4c4c4] border-[#e3e3e3] bg-[#f8f8f8] px-[2px] leading-4">
                  <option>USDJPYm, US Dollar vs Japanese Yen</option>
                </select>
                <Chevron />
              </div>
            </div>
            <div className="flex gap-2">
              <label htmlFor="volume" className={label}>数量 :</label>
              <div className="relative w-[105px]">
                <select id="volume" className="block h-5 w-full appearance-none border border-[#7a7a7a] bg-white px-[5px] leading-4">
                  <option>1.00</option>
                </select>
                <Chevron />
              </div>
            </div>
            <div className="flex gap-2">
              <label htmlFor="sl" className={label}>決済逆指値(S/L)</label>
              <Spinner id="sl" />
              <label htmlFor="tp" className="flex-1 text-right text-[12px]">決済指値(T/P)</label>
              <Spinner id="tp" />
            </div>
            <div className="flex gap-2">
              <label htmlFor="comment" className={label}>コメント :</label>
              <input id="comment" className="h-5 min-w-0 flex-1 border border-b-[#868686] border-[#e3e3e3] bg-white px-1 outline-none" />
            </div>
            <div className="flex gap-2">
              <label htmlFor="type" className={label}>注文種別 :</label>
              <div className="relative flex-1">
                <select id="type" className="block h-5 w-full appearance-none border border-b-[#c4c4c4] border-[#e3e3e3] bg-[#f8f8f8] px-[2px] text-[12px] leading-4">
                  <option>成行注文</option>
                </select>
                <Chevron />
              </div>
            </div>
          </div>
          <fieldset className="relative mt-[8px] flex-1 border border-[#dcdcdc] px-[15px]">
            <legend className="-ml-[10px] px-[2px] text-[12px] leading-4">成行注文</legend>
            <svg width="13" height="20" viewBox="0 0 13 20" className="absolute top-[19px] left-[75px]" aria-hidden="true">
              <path d="M1 1v15l3.500-3 2.500 6 2.500-1-2.500-6h4.500z" fill="#fff" stroke="#000" />
            </svg>
            <p className="mt-[18px] text-center font-['DejaVu_Sans_Condensed','DejaVu_Sans',sans-serif] text-[26px] leading-8">
              128.68<span className="text-[20px]">0</span> / 128.69<span className="text-[20px]">1</span>
            </p>
            <div className="mt-[15px] flex gap-6 text-[12px]">
              <button type="button" className="h-[21px] flex-1 rounded-[3px] border border-[#b5b5b5] bg-[#ff8080] leading-4 shadow-[inset_0_0_0_1px_#fff,inset_0_0_0_2px_#f07070]">成行売り</button>
              <button type="button" className="h-[21px] flex-1 rounded-[3px] border border-[#b5b5b5] bg-[#a0c0ff] leading-4 shadow-[inset_0_0_0_1px_#fff,inset_0_0_0_2px_#8fb0f2]">成行買い</button>
            </div>
            <div className="mt-[9px] h-[21px] rounded-[3px] border border-[#e2e2e2] bg-[#f2f2f2]" />
            <p className="-mx-3 mt-[13px] text-center text-[11px] leading-[13px] whitespace-nowrap">
              ご注意！ 成行注文は、市場状況によって約定価格が決まりますので、必ずしも提示
              <br />
              価格で約定するとは限りません!
            </p>
          </fieldset>
        </form>
      </div>
    </div>
  );
}

/* ---------- page ---------- */

export default function App() {
  return (
    <div className="flex min-h-screen flex-col overflow-hidden rounded-[8px] border-t border-l border-[#85888c] bg-[#f0f0f0] font-['Open_Sans','Noto_Sans_CJK_JP',sans-serif] text-[12px] text-black">
      <header className="flex h-[30px] items-center bg-white pl-2">
        <svg width="16" height="16" viewBox="0 0 16 16" aria-hidden="true">
          <rect width="16" height="16" fill="#0b0d12" />
          <path d="M2 9l4-4 1.500 1.500L10 4l2 .5.500 4.500-2-2-2 2.500L6.500 8z" fill="#d9a441" />
          <path d="M2 12h12" stroke="#6a5a3a" />
        </svg>
        <span className="ml-[3px] h-[12px] w-[52px] bg-linear-to-r from-[#bdbdbd] to-[#e6e6e6]" />
        <h1 className="ml-[4px] flex-1 text-[12px]">Exness-Real28 - Exness Technologies Ltd - USDJPYm,Weekly</h1>
        <button type="button" aria-label="最小化" className="flex w-[46px] justify-center"><svg width="10" height="10" aria-hidden="true"><path d="M0 5.500h10" stroke="#000" /></svg></button>
        <button type="button" aria-label="元に戻す" className="flex w-[45px] justify-center"><svg width="10" height="10" aria-hidden="true"><rect x=".5" y=".5" width="9" height="9" rx="1" fill="none" stroke="#000" /></svg></button>
        <button type="button" aria-label="閉じる" className="flex w-[47px] justify-center"><svg width="11" height="11" aria-hidden="true"><path d="M.5.5l10 10m0-10l-10 10" stroke="#000" /></svg></button>
      </header>

      <nav className="flex h-5 items-center gap-[13px] pl-[6px]">
        {menus.map((m) => <button key={m} type="button">{m}</button>)}
      </nav>

      {/* Standard toolbar */}
      <div className="flex h-[27px] items-center border-t border-[#a0a0a0]">
        <div className="flex h-full items-center border-r border-b border-[#a0a0a0]">
          <Grip />
          <DropTool label="新規チャート"><NewChartIcon /></DropTool>
          <DropTool label="組表示"><ProfilesIcon /></DropTool>
          <Sep />
          <Tool label="気配値表示" active><MarketWatchIcon /></Tool>
          <Tool label="データウィンドウ"><CrosshairIcon /></Tool>
          <Tool label="ナビゲーター" active><FolderStarIcon /></Tool>
          <Tool label="ターミナル" active><TerminalIcon /></Tool>
          <Tool label="ストラテジーテスター"><TesterIcon /></Tool>
          <Sep />
          <button type="button" className="flex w-[84px] items-center gap-px pl-[7px] text-[13px] leading-5 whitespace-nowrap"><NewOrderIcon />新規注文</button>
          <Tool label="MetaEditor"><BookIcon /></Tool>
          <Tool label="VPS"><VpsIcon /></Tool>
          <Tool label="シグナル"><SignalIcon /></Tool>
          <button type="button" className="flex w-[85px] items-center gap-[3px] pl-[4px] text-[13px] leading-5 whitespace-nowrap"><ExpertIcon stop />自動売買</button>
        </div>
        <div className="flex h-full items-center border-r border-b border-[#a0a0a0]">
          <Grip />
          <Tool label="バーチャート"><BarsIcon /></Tool>
          <Tool label="ローソク足" active><CandleIcon /></Tool>
          <Tool label="ラインチャート"><LineIcon /></Tool>
          <Sep />
          <Tool label="拡大"><ZoomIcon plus /></Tool>
          <Tool label="縮小"><ZoomIcon /></Tool>
          <Tool label="整列"><TileIcon /></Tool>
          <Sep />
          <Tool label="自動スクロール" active><ScrollIcon /></Tool>
          <Tool label="チャートシフト"><ShiftIcon /></Tool>
          <Sep />
          <span className="w-1" />
          <DropTool label="インディケータ"><IndicatorsIcon /></DropTool>
          <DropTool label="時間足"><ClockIcon /></DropTool>
          <DropTool label="定型チャート"><TemplateIcon /></DropTool>
        </div>
        <div className="ml-auto flex items-center gap-2 pr-[8px]">
          <button type="button" aria-label="検索"><SearchIcon /></button>
          <button type="button" aria-label="通知" className="relative">
            <svg width="24" height="22" viewBox="0 0 24 22" aria-hidden="true">
              <path d="M2 11c0-3 12-3 12 0v4c0 3-6 3-8 2l-3 3v-4c-1-1-1-3-1-5z" fill="#e6e6e6" stroke="#a8a8a8" />
            </svg>
            <span className="absolute top-0 right-0 flex size-4 items-center justify-center rounded-full bg-[#e2321c] text-[10px] text-white">1</span>
          </button>
        </div>
      </div>

      {/* Line studies and periodicity */}
      <div className="flex h-[27px] items-center">
        <div className="flex h-full items-center border-r border-[#a0a0a0]">
          <Grip />
          <Tool label="カーソル" active><Svg><path d="M4 1v13l3-2.500 2 4.500 2-1-2-4.500h4z" fill="#444" /></Svg></Tool>
          <Tool label="クロスヘア"><Svg><path d="M8.500 1.500v6M8.500 11v6M.5 9.500h6M10 9.500h6" stroke="#555" /></Svg></Tool>
          <Sep />
          <Tool label="垂直線"><Svg><path d="M8.500 3v12" stroke="#555" /></Svg></Tool>
          <Tool label="水平線"><Svg><path d="M3 9.500h12" stroke="#555" /></Svg></Tool>
          <Tool label="トレンドライン"><Svg><path d="M3 15L15 3" stroke="#555" /></Svg></Tool>
          <Tool label="チャネル">
            <Svg>
              <path d="M1 12L14 2.500M2 16l12-9M4.500 5.500v10M7.500 3.500v10M10.500 1.500v9M13 1v7" stroke="#555" />
              <path d="M17 11.500h-3.500v5H17M13.500 14H16.500" stroke="#555" />
            </Svg>
          </Tool>
          <Tool label="フィボナッチ">
            <Svg>
              <path d="M2 2.500h14M2 6.500h14M2 10.500h14M2 14.500h8" stroke="#555" strokeDasharray="1 1" />
              <path d="M16 12.500h-3.500v5M12.500 15H15.500" stroke="#555" />
            </Svg>
          </Tool>
          <Tool label="テキスト"><span className="text-[13px]">A</span></Tool>
          <Tool label="ラベル">
            <span className="flex size-[14px] items-center justify-center border border-dotted border-[#555] text-[11px] leading-none">T</span>
          </Tool>
          <DropTool label="矢印">
            <Svg><path d="M2 5l3-3 3 3-3 3zM8 13l3-3 5 3-3 4z" fill="#444" /><path d="M4 9l3 3 7-7" stroke="#444" /></Svg>
          </DropTool>
        </div>
        <div className="flex h-full items-center border-r border-[#a0a0a0]">
          <Grip />
          {timeframes.map((t) => <Tool key={t} label={t} active={t === 'W1'}>{t}</Tool>)}
        </div>
      </div>

      <main className="flex flex-1">
        <aside className="flex w-[238px] shrink-0 flex-col border-t border-r border-t-[#a0a0a0] border-r-[#fafafa]">
          <MarketWatch />
          <Navigator />
        </aside>

        <div className="flex min-w-0 flex-1 flex-col border-t border-l border-t-[#a0a0a0] border-l-[#696969]">
          <div className="flex flex-1 flex-col border-t border-[#404040] bg-[#ababab]">
            {/* Weekly window, on top */}
            <section className="relative border-l-2 border-[#222] bg-black pt-px pr-[6px] pb-px">
              <div className="rounded-t-[5px] border-r border-b border-l border-l-[#d8e8f8] border-r-[#30c8e0] border-b-[#30c8e0] bg-linear-to-b from-[#98b4d2] to-[#b9d1ea] to-[30px] pr-[5px] pb-[6px] pl-[7px]">
                <div className="flex h-[30px] items-center gap-1 pt-[6px] pr-[3px] pl-[2px]">
                  <ChartsIcon />
                  <h2 className="flex-1">USDJPYm,Weekly</h2>
                  <WindowButtons focused />
                </div>
                <div className="border-2 border-t-[#606060] border-r-white border-b-white border-l-[#808080]">
                  <PriceChart
                    view="252 140 1169 537"
                    left={254} top={142} right={1374} bottom={656}
                    gridX={287} gridY={158}
                    price="128.681" priceY={180}
                    prices={weeklyPrices} dates={weeklyDates}
                    title="USDJPYm,Weekly  126.610 129.400 126.235 128.681"
                    data={weekly} half={5}
                  />
                </div>
              </div>
              <OrderDialog />
            </section>

            <section className="mt-px mr-[3px] rounded-t-[5px] border border-[#404040] bg-linear-to-b from-[#bfcddb] to-[#d7e4f2] to-[30px] pr-[7px] pb-[7px] pl-[7px]">
              <div className="flex h-[31px] items-center gap-1 pt-[7px] pr-[2px] pl-[2px] text-[#999]">
                <ChartsIcon />
                <h2 className="flex-1">EURUSDm,H1</h2>
                <WindowButtons />
              </div>
              <div className="border-2 border-t-[#606060] border-r-white border-b-white border-l-[#808080]">
                <PriceChart
                  view="250 722 1172 488"
                  left={252} top={724} right={1376} bottom={1189}
                  gridX={285} gridY={756}
                  price="1.08072" priceY={1047}
                  prices={hourlyPrices} dates={hourlyDates}
                  title="EURUSDm,H1  1.08068 1.08098 1.08068 1.08072"
                  data={hourly} half={2}
                />
              </div>
            </section>
            <div className="h-[4px] border-b border-[#404040] bg-[#dfe9f3]" />
          </div>

          <div className="flex h-[21px] items-start border-t-2 border-white bg-[#f0f0f0] text-[#6d6d6d]">
            <div className="flex h-[19px] flex-1 border-t border-black leading-4">
              <div className="flex pl-[3px]">
                {['EURUSD,H4', 'USDCHF,H4', 'GBPUSD,H4', 'USDJPYm,H1'].map((t, i) => (
                  <button key={t} type="button" className={`flex items-center justify-center ${i === 3 ? 'w-[92px]' : 'w-[85px]'}`}>
                    <span className="flex-1">{t}</span>
                    {i < 3 && <span className="h-3 w-px bg-[#6d6d6d]" />}
                  </button>
                ))}
                <button type="button" className="-mt-px w-[116px] border-r-2 border-b border-l border-black bg-white text-black">USDJPYm,Weekly</button>
                <button type="button" className="flex w-[97px] items-center">
                  <span className="flex-1">EURUSDm,H1</span>
                  <span className="h-3 w-px bg-[#6d6d6d]" />
                </button>
              </div>
              <div className="ml-auto flex items-center gap-[14px] pr-[10px]">
                <svg width="4" height="7" aria-hidden="true"><path d="M4 0v7L0 3.500z" fill="#a0a0a0" /></svg>
                <svg width="4" height="7" aria-hidden="true"><path d="M0 0v7l4-3.500z" fill="#a0a0a0" /></svg>
              </div>
            </div>
          </div>
        </div>
      </main>

      {/* Terminal */}
      <section className="flex h-[49px] border-t border-[#a0a0a0] pt-1">
        <div className="flex w-[14px] shrink-0 flex-col items-center gap-[5px]">
          <button type="button" aria-label="閉じる" className="pt-[2px]">
            <svg width="7" height="7" viewBox="0 0 7 7" className="block" aria-hidden="true"><path d="M.5.5l6 6m0-6l-6 6" stroke="#000" strokeWidth="1.600" /></svg>
          </button>
          <h2 className="h-[29px] w-[13px] rotate-180 bg-[#c9d7e6] text-[9px] leading-[13px] whitespace-nowrap [writing-mode:vertical-rl] [text-orientation:sideways]">ターミ</h2>
        </div>
        <div className="mr-[3px] flex-1 border-t border-l border-[#a0a0a0]">
          <div className="flex h-[18px] items-end pr-[36px] pb-[7px] pl-[18px]">
            <span className="h-[2px] flex-1 bg-[#858585]" />
          </div>
          <div className="flex h-5 border-t border-black leading-4 text-[#6d6d6d]">
            <button type="button" className="-mt-px ml-[3px] w-[47px] border-r-2 border-b border-l border-black bg-white text-black">取引</button>
            {terminalTabs.map((t) => (
              <button key={t.label} type="button" className={`flex shrink-0 items-center whitespace-nowrap ${t.style}`}>
                <span className="flex-1">
                  {t.label}
                  {t.badge && <sub className="text-[9px] leading-none font-bold text-[#ff0000]">{t.badge}</sub>}
                </span>
                <span className="h-3 w-px bg-[#6d6d6d]" />
              </button>
            ))}
          </div>
        </div>
      </section>

      <footer className="flex h-6 border-t border-[#a0a0a0] leading-[23px]">
        <span className="flex-1 pl-[2px] text-[11px]">F1キーでヘルプが表示されます</span>
        <span className="my-[2px] w-[118px] border-l border-[#c0c0c0] pl-[5px] leading-[19px]">Default</span>
        <span className="my-[2px] w-[101px] border-l border-[#c0c0c0]" />
        <span className="my-[2px] w-[70px] border-l border-[#c0c0c0]" />
        <span className="my-[2px] w-[71px] border-l border-[#c0c0c0]" />
        <span className="my-[2px] w-[68px] border-l border-[#c0c0c0]" />
        <span className="my-[2px] w-[71px] border-l border-[#c0c0c0]" />
        <span className="my-[2px] w-[65px] border-l border-[#c0c0c0]" />
        <span className="my-[2px] flex w-[150px] items-center gap-[3px] border-l border-[#c0c0c0] pl-[5px] leading-[19px]">
          <svg width="24" height="14" aria-hidden="true">
            <path d="M1 1v10M4 1v10M7 1v11M10 1v11M13 2v11M16 2v11M19 2v12M22 2v12" stroke="#1f7a3a" strokeWidth="2" />
          </svg>
          842/4 kb
        </span>
      </footer>
    </div>
  );
}
